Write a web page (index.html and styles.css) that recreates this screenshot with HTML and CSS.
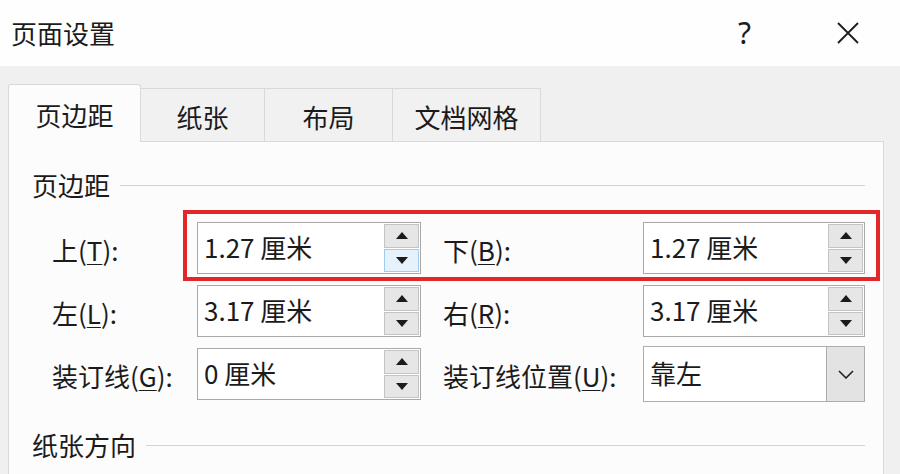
FILE: index.html
```html
<!DOCTYPE html>
<html lang="zh-CN">
<head>
<meta charset="utf-8">
<title>页面设置</title>
<link rel="stylesheet" href="styles.css">
</head>
<body>
<div class="dialog">
  <div class="titlebar">
    <div class="title">页面设置</div>
    <div class="title-btns">
      <span class="help">?</span>
      <span class="close">
        <svg width="24" height="24" viewBox="0 0 24 24"><path d="M2 2 L22 22 M22 2 L2 22" stroke="#1b1b1b" stroke-width="1.8" fill="none"/></svg>
      </span>
    </div>
  </div>

  <div class="tabs">
    <div class="tab active t1">页边距</div>
    <div class="tab t2">纸张</div>
    <div class="tab t3">布局</div>
    <div class="tab t4">文档网格</div>
  </div>

  <div class="panel">
    <div class="section">
      <span class="section-title">页边距</span>
      <span class="section-line"></span>
    </div>

    <div class="grid">
      <label class="lbl">上(<u>T</u>):</label>
      <div class="field">
        <span class="value">1.27 厘米</span>
        <span class="spinner">
          <span class="sbtn up"><svg width="12" height="7" viewBox="0 0 12 7"><path d="M0 7 L6 0 L12 7 Z" fill="#1b1b1b"/></svg></span>
          <span class="sbtn down hover"><svg width="12" height="7" viewBox="0 0 12 7"><path d="M0 0 L12 0 L6 7 Z" fill="#1b1b1b"/></svg></span>
        </span>
      </div>
      <span class="gap"></span>
      <label class="lbl">下(<u>B</u>):</label>
      <div class="field">
        <span class="value">1.27 厘米</span>
        <span class="spinner">
          <span class="sbtn up"><svg width="12" height="7" viewBox="0 0 12 7"><path d="M0 7 L6 0 L12 7 Z" fill="#1b1b1b"/></svg></span>
          <span class="sbtn down"><svg width="12" height="7" viewBox="0 0 12 7"><path d="M0 0 L12 0 L6 7 Z" fill="#1b1b1b"/></svg></span>
        </span>
      </div>

      <label class="lbl">左(<u>L</u>):</label>
      <div class="field">
        <span class="value">3.17 厘米</span>
        <span class="spinner">
          <span class="sbtn up"><svg width="12" height="7" viewBox="0 0 12 7"><path d="M0 7 L6 0 L12 7 Z" fill="#1b1b1b"/></svg></span>
          <span class="sbtn down"><svg width="12" height="7" viewBox="0 0 12 7"><path d="M0 0 L12 0 L6 7 Z" fill="#1b1b1b"/></svg></span>
        </span>
      </div>
      <span class="gap"></span>
      <label class="lbl">右(<u>R</u>):</label>
      <div class="field">
        <span class="value">3.17 厘米</span>
        <span class="spinner">
          <span class="sbtn up"><svg width="12" height="7" viewBox="0 0 12 7"><path d="M0 7 L6 0 L12 7 Z" fill="#1b1b1b"/></svg></span>
          <span class="sbtn down"><svg width="12" height="7" viewBox="0 0 12 7"><path d="M0 0 L12 0 L6 7 Z" fill="#1b1b1b"/></svg></span>
        </span>
      </div>

      <label class="lbl">装订线(<u>G</u>):</label>
      <div class="field">
        <span class="value">0 厘米</span>
        <span class="spinner">
          <span class="sbtn up"><svg width="12" height="7" viewBox="0 0 12 7"><path d="M0 7 L6 0 L12 7 Z" fill="#1b1b1b"/></svg></span>
          <span class="sbtn down"><svg width="12" height="7" viewBox="0 0 12 7"><path d="M0 0 L12 0 L6 7 Z" fill="#1b1b1b"/></svg></span>
        </span>
      </div>
      <span class="gap"></span>
      <label class="lbl">装订线位置(<u>U</u>):</label>
      <div class="field select">
        <span class="value">靠左</span>
        <span class="dd-btn"><svg width="16" height="9" viewBox="0 0 16 9"><path d="M1 1 L8 8 L15 1" stroke="#1b1b1b" stroke-width="1.5" fill="none"/></svg></span>
      </div>
    </div>

    <div class="section section2">
      <span class="section-title">纸张方向</span>
      <span class="section-line"></span>
    </div>

    <div class="highlight"></div>
  </div>
</div>
</body>
</html>
```

FILE: styles.css
```css
* { box-sizing: border-box; }

html, body {
  margin: 0;
  padding: 0;
  width: 900px;
  height: 474px;
  overflow: hidden;
}

body {
  background: #f0f0f0;
  font-family: "Noto Sans CJK SC", "Noto Sans", sans-serif;
  color: #1b1b1b;
}

.titlebar {
  height: 66px;
  background: #fefefe;
  display: flex;
  align-items: center;
  justify-content: space-between;
  padding-left: 11px;
}

.title {
  font-size: 26px;
  line-height: 30px;
}

.title-btns {
  display: flex;
  align-items: center;
}

.help {
  font-family: "Noto Sans", sans-serif;
  font-size: 30px;
  line-height: 34px;
  width: 16px;
  margin-right: 82px;
}

.close {
  width: 24px;
  height: 24px;
  margin-right: 40px;
  display: flex;
}

.tabs {
  display: flex;
  align-items: flex-end;
  margin-top: 18px;
  padding-left: 8px;
  height: 57px;
  position: relative;
  z-index: 2;
}

.tab {
  height: 53px;
  display: flex;
  align-items: center;
  justify-content: center;
  padding-top: 4px;
  font-size: 26px;
  line-height: 30px;
  background: #f1f1f1;
  border: 1px solid #d9d9d9;
  border-left: none;
  border-bottom: none;
}

.tab.active {
  height: 58px;
  margin-bottom: -1px;
  background: #fcfcfc;
  border-left: 1px solid #d9d9d9;
  border-radius: 3px 3px 0 0;
  padding-top: 2px;
}

.t1 { width: 133px; }
.t2 { width: 124px; }
.t3 { width: 128px; }
.t4 { width: 148px; }

.panel {
  position: relative;
  margin: 0 16px 0 8px;
  height: 340px;
  background: #fcfcfc;
  border: 1px solid #d9d9d9;
  padding: 28px 18px 0 23px;
}

.section {
  display: flex;
  align-items: center;
  height: 30px;
}

.section-title {
  font-size: 26px;
  line-height: 30px;
  margin-right: 10px;
}

.section-line {
  flex: 1;
  height: 1px;
  background: #d3d3d3;
}

.section2 {
  margin-top: 30px;
}

.grid {
  margin-top: 22px;
  margin-left: 20px;
  display: grid;
  grid-template-columns: 145px 224px 22px 200px 222px;
  grid-auto-rows: 52px;
  row-gap: 11px;
  align-items: center;
}

.lbl {
  font-size: 26px;
  line-height: 30px;
  white-space: nowrap;
  padding-top: 4px;
}

.lbl u {
  text-underline-offset: 3px;
  text-decoration-thickness: 1px;
}

.field {
  height: 52px;
  display: flex;
  background: #ffffff;
  border: 1px solid #a9a9a9;
}

.value {
  flex: 1;
  display: flex;
  align-items: center;
  padding-left: 6px;
  font-size: 26px;
  line-height: 30px;
  padding-bottom: 2px;
}

.spinner {
  width: 37px;
  display: flex;
  flex-direction: column;
  padding: 1px;
  gap: 1px;
}

.sbtn {
  flex: 1;
  display: flex;
  align-items: center;
  justify-content: center;
  background: #e6e6e6;
  border: 1px solid #c4c4c4;
}

.sbtn.hover {
  background: #e5f1fb;
  border-color: #a3cbee;
}

.field.select {
  height: 56px;
  border-color: #adadad;
}

.dd-btn {
  width: 38px;
  display: flex;
  align-items: center;
  justify-content: center;
  background: #e3e3e3;
  border-left: 1px solid #adadad;
}

.highlight {
  position: absolute;
  left: 174px;
  top: 68px;
  width: 697px;
  height: 71px;
  border: 4px solid #e3262a;
  pointer-events: none;
}
```
